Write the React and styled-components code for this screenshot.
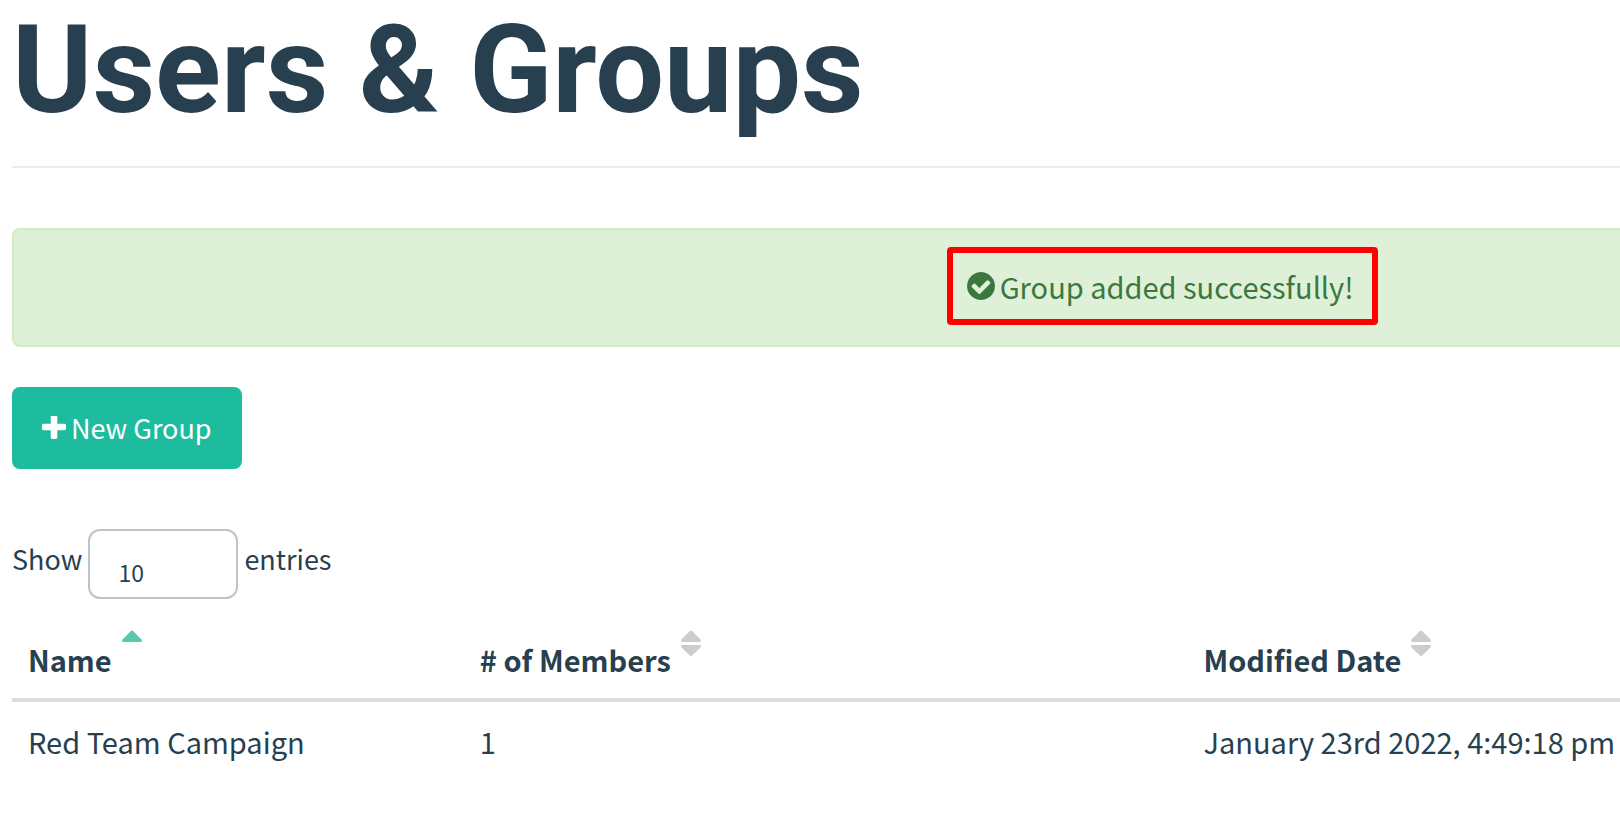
import React from "react";
import styled, { createGlobalStyle } from "styled-components";

const ink = "#283f50";

const GlobalStyle = createGlobalStyle`
  *, *::before, *::after { box-sizing: border-box; }
  body {
    margin: 0;
    background: #fff;
    color: ${ink};
    font-family: "Noto Sans CJK SC", "Open Sans", sans-serif;
    font-size: 29px;
    line-height: 46px;
  }
`;

const Page = styled.main`
  padding-left: 12px;
`;

const Title = styled.h1`
  margin: 0 0 60px;
  padding-bottom: 24px;
  border-bottom: 2px solid #e8eaed;
  font-family: Roboto, sans-serif;
  font-size: 122px;
  font-weight: 700;
  line-height: 142px;
`;

const Alert = styled.div`
  display: grid;
  grid-template-columns: 935fr auto 243fr;
  align-items: center;
  margin-bottom: 40px;
  padding: 17px 0 20px;
  border: 2px solid #d6e9c6;
  border-right: 0;
  border-radius: 8px 0 0 8px;
  background: #dff0d9;
  color: #3b783d;
`;

const AlertMessage = styled.div`
  grid-column: 2;
  display: flex;
  align-items: center;
  gap: 5px;
  padding: 10px 18px 10px 14px;
  border: 6px solid #ff0000;
  border-radius: 4px;
`;

const Icon = styled.svg`
  flex: none;
  display: block;
  width: ${(p) => p.$size}px;
  height: ${(p) => p.$size}px;
  fill: currentColor;
`;

const PrimaryButton = styled.button`
  display: flex;
  align-items: center;
  gap: 5px;
  height: 82px;
  margin-bottom: 60px;
  padding: 0 30px;
  border: 0;
  border-radius: 8px;
  background: #1dbc9f;
  color: #fff;
  font: inherit;
  font-size: 27px;
  cursor: pointer;
`;

const LengthControl = styled.label`
  display: flex;
  align-items: center;
  gap: 6px;
  margin-bottom: 37px;
  font-size: 27px;
`;

const LengthText = styled.span`
  padding-bottom: 10px;
`;

const LengthSelect = styled.select`
  appearance: none;
  width: 150px;
  height: 70px;
  padding: 16px 28px 0;
  border: 2px solid #bdc3c7;
  border-radius: 12px;
  background: #fff;
  color: inherit;
  font: inherit;
  font-size: 23px;
`;

const GroupTable = styled.table`
  width: 100%;
  table-layout: fixed;
  border-collapse: separate;
  border-spacing: 0;
`;

const Column = styled.col`
  width: ${(p) => p.$width};
`;

const HeaderCell = styled.th`
  padding: 0 0 16px 16px;
  border-bottom: 4px solid #ddd;
  text-align: left;
  font-weight: 700;
`;

const SortLabel = styled.span`
  display: flex;
  align-items: flex-start;
  gap: 10px;
`;

const SortMark = styled.svg`
  flex: none;
  width: 20px;
  height: 28px;
  margin-top: -6px;
  fill: ${(p) => (p.$active ? "#5bc9b0" : "#cccccc")};
`;

const Cell = styled.td`
  padding: 16px 0 16px 16px;
  white-space: nowrap;
`;

const CheckCircle = () => (
  <Icon $size={28} viewBox="128 128 1536 1536" aria-hidden="true">
    <path d="M1412 734q0-28-18-46l-91-90q-19-19-45-19t-45 19l-408 407-226-226q-19-19-45-19t-45 19l-91 90q-18 18-18 46 0 27 18 45l362 362q19 19 45 19 27 0 46-19l543-543q18-18 18-45zm252 162q0 209-103 385.5t-279.5 279.5-385.5 103-385.5-103-279.5-279.5-103-385.5 103-385.5 279.5-279.5 385.5-103 385.5 103 279.5 279.5 103 385.5z" />
  </Icon>
);

const Plus = () => (
  <Icon $size={24} viewBox="192 192 1408 1408" aria-hidden="true">
    <path d="M1600 736v192q0 40-28 68t-68 28h-416v416q0 40-28 68t-68 28h-192q-40 0-68-28t-28-68v-416h-416q-40 0-68-28t-28-68v-192q0-40 28-68t68-28h416v-416q0-40 28-68t68-28h192q40 0 68 28t28 68v416h416q40 0 68 28t28 68z" />
  </Icon>
);

const SortIcon = ({ active }) => (
  <SortMark $active={active} viewBox="0 0 20 28" aria-hidden="true">
    <path d="M1.5 12Q0 12 0 10.7 0 10 .5 9.5L8.9 1Q10 0 11.1 1L19.5 9.5Q20 10 20 10.7 20 12 18.5 12Z" />
    {!active && (
      <path d="M1.5 15Q0 15 0 16.2 0 16.8 .5 17.4L8.9 25.5Q10 26.5 11.1 25.5L19.5 17.4Q20 16.8 20 16.2 20 15 18.5 15Z" />
    )}
  </SortMark>
);

const columns = [
  { label: "Name", width: "28.1%", sorted: true },
  { label: "# of Members", width: "45%" },
  { label: "Modified Date", width: "26.9%" },
];

const groups = [["Red Team Campaign", "1", "January 23rd 2022, 4:49:18 pm"]];

export default function App() {
  return (
    <>
      <GlobalStyle />
      <Page>
        <Title>Users &amp; Groups</Title>
        <Alert role="status">
          <AlertMessage>
            <CheckCircle />
            <span>Group added successfully!</span>
          </AlertMessage>
        </Alert>
        <PrimaryButton type="button">
          <Plus />
          <span>New Group</span>
        </PrimaryButton>
        <LengthControl>
          <LengthText>Show</LengthText>
          <LengthSelect defaultValue="10">
            <option>10</option>
            <option>25</option>
            <option>50</option>
            <option>100</option>
          </LengthSelect>
          <LengthText>entries</LengthText>
        </LengthControl>
        <GroupTable>
          <colgroup>
            {columns.map((c) => (
              <Column key={c.label} $width={c.width} />
            ))}
          </colgroup>
          <thead>
            <tr>
              {columns.map((c) => (
                <HeaderCell
                  key={c.label}
                  scope="col"
                  aria-sort={c.sorted ? "ascending" : "none"}
                >
                  <SortLabel>
                    {c.label}
                    <SortIcon active={c.sorted} />
                  </SortLabel>
                </HeaderCell>
              ))}
            </tr>
          </thead>
          <tbody>
            {groups.map((row) => (
              <tr key={row[0]}>
                {row.map((value) => (
                  <Cell key={value}>{value}</Cell>
                ))}
              </tr>
            ))}
          </tbody>
        </GroupTable>
      </Page>
    </>
  );
}
